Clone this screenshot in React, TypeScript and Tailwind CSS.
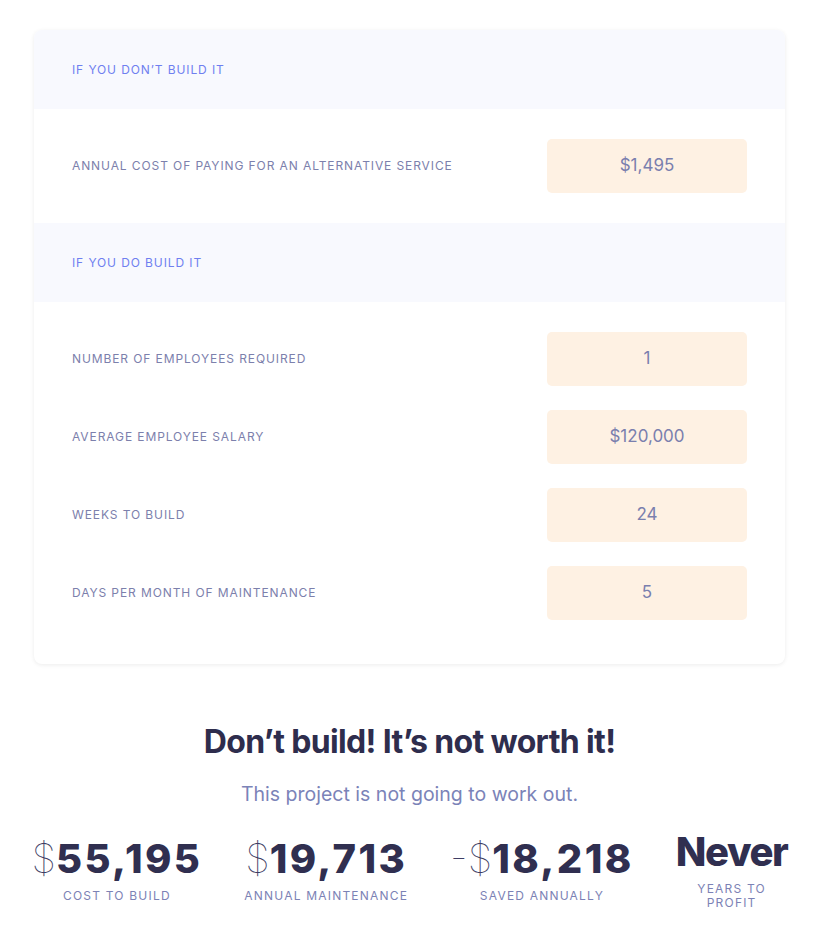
import React from "react";

const Header = ({ children }: { children: React.ReactNode }) => (
  <div className="h-[79px] bg-[#f8f9fe] flex items-center px-[38px]">
    <span className="text-[12px] tracking-[0.075em] text-[#6f7ff0] uppercase">{children}</span>
  </div>
);

const Row = ({ label, value }: { label: string; value: string }) => (
  <div className="flex items-center justify-between">
    <span className="text-[12px] tracking-[0.075em] text-[#7c80ac] uppercase">{label}</span>
    <div className="w-[200px] h-[54px] rounded-[5px] bg-[#fef1e3] flex items-center justify-center text-[17px] text-[#7a7fae]">
      {value}
    </div>
  </div>
);

const Stat = ({ prefix, value, label }: { prefix?: string; value: string; label: string }) => (
  <div className="flex flex-col items-center">
    <div className="flex items-baseline leading-none text-[#302f50]">
      <span className="text-[40px] font-thin text-[#3e3d64]">{prefix}</span>
      <span className="text-[40px] font-extrabold tracking-[0.06em]">{value}</span>
    </div>
    <div className="mt-[10px] whitespace-nowrap text-center text-[12px] tracking-[0.1em] text-[#7c82b5] uppercase leading-[14px]">
      {label}
    </div>
  </div>
);

export default function App() {
  return (
    <div className="min-h-[942px] bg-white font-['Inter',sans-serif]">
      <div className="pt-[30px] flex justify-center">
        <div className="w-[751px] rounded-[8px] bg-white shadow-[0_1px_4px_rgba(0,0,0,0.08)] overflow-hidden">
          <Header>If you don’t build it</Header>
          <div className="px-[38px] py-[30px]">
            <Row label="Annual cost of paying for an alternative service" value="$1,495" />
          </div>
          <Header>If you do build it</Header>
          <div className="px-[38px] pt-[30px] pb-[44px] flex flex-col gap-[24px]">
            <Row label="Number of employees required" value="1" />
            <Row label="Average employee salary" value="$120,000" />
            <Row label="Weeks to build" value="24" />
            <Row label="Days per month of maintenance" value="5" />
          </div>
        </div>
      </div>
      <h1 className="mt-[58px] text-center text-[32px] font-bold tracking-[-0.02em] text-[#2e2d4d] leading-[40px]">
        Don’t build! It’s not worth it!
      </h1>
      <p className="mt-[18px] text-center text-[19.5px] text-[#7b83b8] leading-[28px]">This project is not going to work out.</p>
      <div className="mt-[24px] flex justify-center items-center gap-[42px]">
        <Stat prefix="$" value="55,195" label="Cost to build" />
        <Stat prefix="$" value="19,713" label="Annual maintenance" />
        <Stat prefix="-$" value="18,218" label="Saved annually" />
        <div className="flex flex-col items-center">
          <div className="leading-none text-[40px] font-extrabold tracking-[-0.035em] text-[#302f50]">Never</div>
          <div className="w-0 min-w-full mt-[10px] text-center text-[12px] tracking-[0.1em] text-[#7c82b5] uppercase leading-[14px]">
            Years to profit
          </div>
        </div>
      </div>
    </div>
  );
}
